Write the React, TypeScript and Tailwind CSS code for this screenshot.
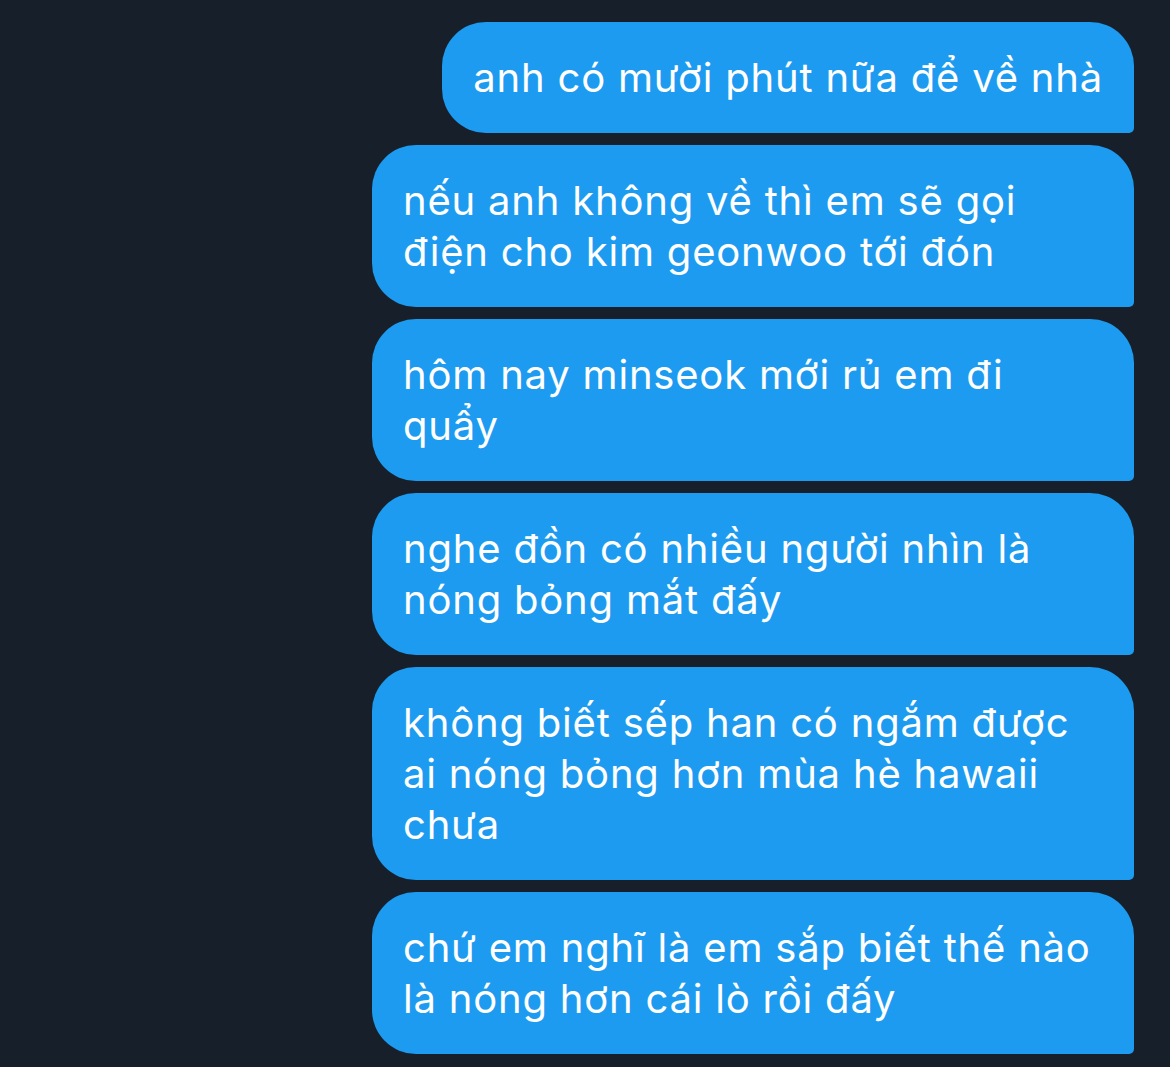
const messages: string[][] = [
  ["anh có mười phút nữa để về nhà"],
  ["nếu anh không về thì em sẽ gọi", "điện cho kim geonwoo tới đón"],
  ["hôm nay minseok mới rủ em đi", "quẩy"],
  ["nghe đồn có nhiều người nhìn là", "nóng bỏng mắt đấy"],
  ["không biết sếp han có ngắm được", "ai nóng bỏng hơn mùa hè hawaii", "chưa"],
  ["chứ em nghĩ là em sắp biết thế nào", "là nóng hơn cái lò rồi đấy"],
];

function Bubble({ lines }: { lines: string[] }) {
  const wide = lines.length > 1;
  return (
    <div
      className={`${wide ? "w-[762px]" : "max-w-[762px]"} rounded-[44px] rounded-br-[5px] bg-[#1d9bf0] px-[31px] py-[30px] text-[40px] leading-[51px] tracking-[0.02em] text-white`}
    >
      {lines.map((l, i) => (
        <div key={i} className="whitespace-nowrap">
          {l}
        </div>
      ))}
    </div>
  );
}

export default function App() {
  return (
    <div
      className="min-h-[1067px] w-[1170px] bg-[#17202a] pt-[22px] pb-[14px] pr-[36px]"
      style={{ fontFamily: "Inter, 'Noto Sans', sans-serif" }}
    >
      <div className="flex flex-col items-end gap-[12px]">
        {messages.map((m) => (
          <Bubble key={m[0]} lines={m} />
        ))}
      </div>
    </div>
  );
}
